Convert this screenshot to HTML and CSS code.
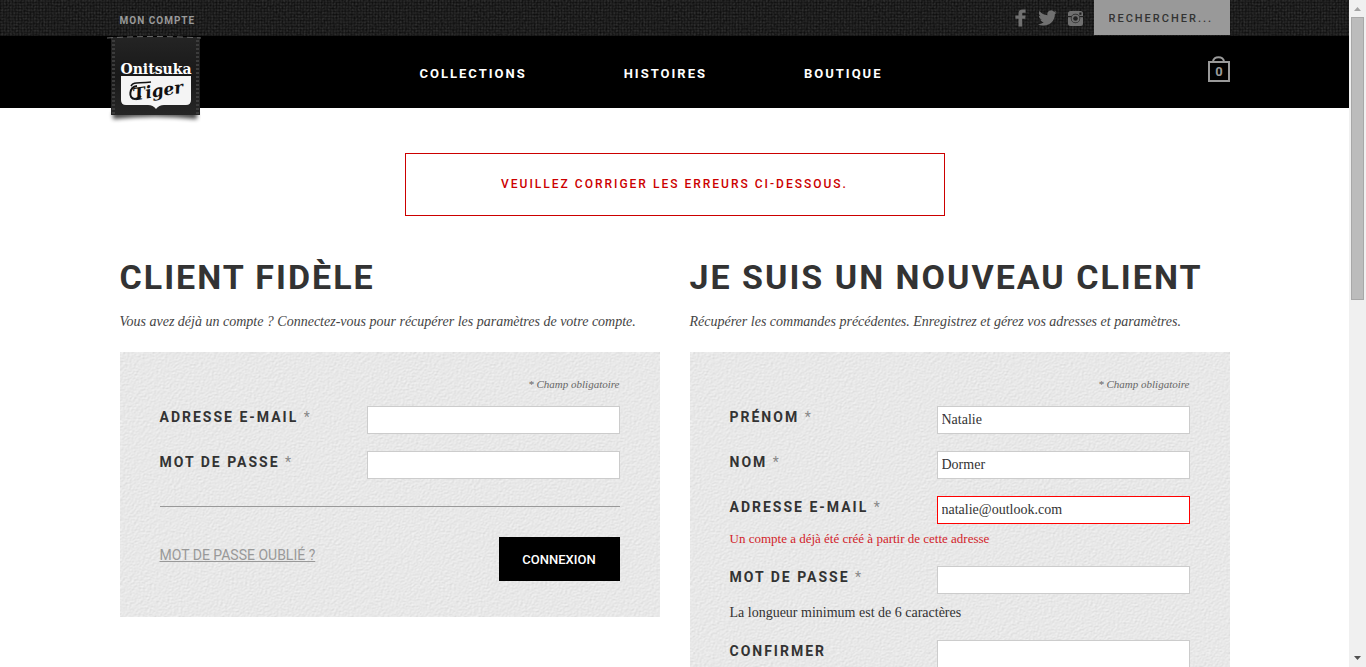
FILE: index.html
```html
<!DOCTYPE html>
<html lang="fr">
<head>
<meta charset="utf-8">
<meta name="viewport" content="width=device-width, initial-scale=1">
<title>Onitsuka Tiger</title>
<link rel="stylesheet" href="styles.css">
</head>
<body>
<div class="window">
  <div class="page">
    <header>
      <div class="topbar">
        <div class="container topbar-row">
          <a class="account" href="#">MON COMPTE</a>
          <div class="tools">
            <a href="#" aria-label="Facebook"><svg width="12" height="18" viewBox="0 0 12 18"><path d="M3.500 17.500V9.800H.4V6.400h3.100V4.500C3.500 1.700 5 .4 7.600.4h3v3.300H8.500C7.500 3.700 7.200 4.100 7.200 5v1.400h3.400l-.4 3.400h-3v7.700z"/></svg></a>
            <a href="#" aria-label="Twitter"><svg width="19" height="16" viewBox="0 0 19 16"><path d="M19 2.300c-.7.300-1.300.5-2.100.6.800-.5 1.300-1.200 1.600-2-.7.400-1.500.7-2.400.9A3.800 3.800 0 0 0 9.500 5.300C6.200 5.100 3.400 3.600 1.500 1.100c-1.100 1.800-.5 4 1.100 5.100-.6 0-1.100-.2-1.700-.5 0 1.900 1.300 3.400 3 3.800-.6.200-1.100.2-1.700.1.500 1.500 1.900 2.600 3.500 2.600C4 13.600 2.100 14.100 0 13.900c1.700 1 3.700 1.700 5.800 1.700 7.200 0 11.300-6 11-11.300.8-.5 1.600-1.200 2.200-2z"/></svg></a>
            <a href="#" aria-label="Instagram"><svg width="15" height="15" viewBox="0 0 15 15"><path fill-rule="evenodd" d="M2.500 0h10A2.500 2.500 0 0 1 15 2.500v10a2.500 2.500 0 0 1-2.500 2.500h-10A2.500 2.500 0 0 1 0 12.500v-10A2.500 2.500 0 0 1 2.500 0zM11.300 1.500v2.300h2.200V1.500z"/><path class="hole" d="M0 5h3.600v1.200H0zM11.400 5H15v1.200h-3.600z"/><circle class="hole" cx="7.500" cy="7.500" r="4.700"/><circle cx="7.500" cy="7.500" r="4"/><circle class="hole" cx="7.500" cy="7.500" r="2.300"/></svg></a>
            <input class="search" type="text" placeholder="RECHERCHER..." aria-label="Rechercher">
          </div>
        </div>
      </div>
      <div class="mainbar">
        <div class="container mainbar-row">
          <a class="logo" href="#" aria-label="Onitsuka Tiger">
            <svg width="94" height="88" viewBox="0 0 94 88">
              <defs>
                <linearGradient id="patch" x1="0" y1="0" x2="0" y2="1"><stop offset="0" stop-color="#242424"/><stop offset=".5" stop-color="#191919"/><stop offset="1" stop-color="#262626"/></linearGradient>
                <filter id="soft" x="-10%" y="-60%" width="120%" height="240%"><feGaussianBlur stdDeviation="2"/></filter>
              </defs>
              <path d="M6 76H90V83Q48 78 6 83z" fill="#000" opacity=".75" filter="url(#soft)"/>
              <path d="M4 1H93V79H4z" fill="url(#patch)"/>
              <path d="M0 2Q47-1 94 2" fill="none" stroke="#666" stroke-dasharray="6 4"/>
              <path d="M6.500 4V78M90.500 4V78" fill="none" stroke="#3c3c3c" stroke-width="3" stroke-dasharray="2 2"/>
              <path d="M14 40H84V64Q84 69 79 69H57Q52 69 49 73Q46 69 41 69H19Q14 69 14 64z" fill="#f4f4f4"/>
              <text class="logo-name" x="49" y="38" text-anchor="middle">Onitsuka</text>
              <text class="logo-tiger" x="51" y="61" text-anchor="middle" transform="rotate(-9 49 56)">Tiger</text>
              <path d="M24 50C27 45 32 48 44 46" fill="none" stroke="#111" stroke-width="1.500"/>
              <path d="M30 50C22 51 21 63 28 63C31 63 33 61 34 60" fill="none" stroke="#111" stroke-width="2"/>
            </svg>
          </a>
          <nav class="menu">
            <a href="#">COLLECTIONS</a>
            <a href="#">HISTOIRES</a>
            <a href="#">BOUTIQUE</a>
          </nav>
          <a class="bag" href="#" aria-label="Panier">
            <svg width="22" height="26" viewBox="0 0 22 26"><path d="M1 6H21V25H1zM5 6C5 -.5 16 -.5 16 6" fill="none" stroke="#999" stroke-width="2"/><text class="bag-count" x="11" y="20" text-anchor="middle">0</text></svg>
          </a>
        </div>
      </div>
    </header>

    <main class="container">
      <p class="alert" role="alert">VEUILLEZ CORRIGER LES ERREURS CI-DESSOUS.</p>
      <div class="columns">
        <section>
          <h1>CLIENT FIDÈLE</h1>
          <p class="intro">Vous avez déjà un compte ? Connectez-vous pour récupérer les paramètres de votre compte.</p>
          <form class="panel">
            <p class="note">* Champ obligatoire</p>
            <div class="field"><label for="login-mail">ADRESSE E-MAIL <span>*</span></label><input id="login-mail" type="email"></div>
            <div class="field"><label for="login-pass">MOT DE PASSE <span>*</span></label><input id="login-pass" type="password"></div>
            <div class="actions">
              <a href="#">MOT DE PASSE OUBLIÉ ?</a>
              <button type="button">CONNEXION</button>
            </div>
          </form>
        </section>
        <section>
          <h1>JE SUIS UN NOUVEAU CLIENT</h1>
          <p class="intro">Récupérer les commandes précédentes. Enregistrez et gérez vos adresses et paramètres.</p>
          <form class="panel">
            <p class="note">* Champ obligatoire</p>
            <div class="field"><label for="first">PRÉNOM <span>*</span></label><input id="first" type="text" value="Natalie"></div>
            <div class="field"><label for="last">NOM <span>*</span></label><input id="last" type="text" value="Dormer"></div>
            <div class="field invalid"><label for="mail">ADRESSE E-MAIL <span>*</span></label><input id="mail" type="email" value="natalie@outlook.com" aria-describedby="mail-error"><p id="mail-error" class="error">Un compte a déjà été créé à partir de cette adresse</p></div>
            <div class="field"><label for="pass">MOT DE PASSE <span>*</span></label><input id="pass" type="password" aria-describedby="pass-hint"><p id="pass-hint" class="hint">La longueur minimum est de 6 caractères</p></div>
            <div class="field"><label for="confirm">CONFIRMER</label><input id="confirm" type="password"></div>
          </form>
        </section>
      </div>
    </main>
  </div>
  <div class="scrollbar" aria-hidden="true">
    <svg width="17" height="17" viewBox="0 0 17 17"><path d="M5 11L8.500 7L12 11z" fill="#a3a3a3"/></svg>
    <div class="thumb"></div>
    <svg class="down" width="17" height="17" viewBox="0 0 17 17"><path d="M5 6H12L8.500 10z" fill="#505050"/></svg>
  </div>
</div>
</body>
</html>
```
FILE: styles.css
```css
* { box-sizing: border-box; }
body { margin: 0; background: #fff; color: #333; font-family: Roboto, sans-serif; }
p, h1 { margin: 0; }
a { color: inherit; text-decoration: none; }
svg { display: block; }

.window { display: flex; height: 100vh; }
.page { flex: 1; min-width: 0; overflow: hidden; }
.container { max-width: 1110px; margin: 0 auto; }

.topbar {
  background-color: #2c2c2c;
  background-image:
    repeating-linear-gradient(0deg, rgba(0, 0, 0, .25) 0 1px, transparent 1px 3px),
    repeating-linear-gradient(90deg, rgba(0, 0, 0, .25) 0 1px, transparent 1px 3px),
    url("data:image/svg+xml,%3Csvg xmlns='http://www.w3.org/2000/svg' width='200' height='36'%3E%3Cfilter id='n' x='0' y='0' width='1' height='1'%3E%3CfeTurbulence type='fractalNoise' baseFrequency='.5' numOctaves='2' stitchTiles='stitch'/%3E%3CfeColorMatrix values='0 0 0 0 0 0 0 0 0 0 0 0 0 0 0 1 0 0 0 -.3'/%3E%3C/filter%3E%3Crect width='200' height='36' filter='url(%23n)'/%3E%3C/svg%3E");
}
.topbar-row { display: flex; justify-content: space-between; height: 36px; }
.account { color: #999; font-size: 10px; font-weight: 700; letter-spacing: 1px; line-height: 41px; }
.tools { display: flex; align-items: center; }
.tools a { margin-right: 11px; }
.tools svg { fill: #707070; }
.tools .hole { fill: #222; }
.search {
  align-self: flex-start; width: 136px; height: 35px; padding: 2px 15px 0; border: 0; border-radius: 0;
  background: #999; color: #333; font: 500 11px Roboto, sans-serif; letter-spacing: 2px;
}
.search::placeholder { color: #333; }

.mainbar { background: #000; }
.mainbar-row { display: flex; align-items: flex-start; height: 72px; }
.logo { margin-left: -13px; height: 72px; }
.logo-name { fill: #fff; font: 700 14px "DejaVu Serif", serif; }
.logo-tiger { fill: #111; font: italic 700 20px "DejaVu Serif", serif; font-size: 17px; }
.menu { display: flex; flex: 1; gap: 97px; padding-left: 219px; line-height: 76px; color: #fff; font-size: 13px; font-weight: 700; letter-spacing: 2px; }
.bag { margin-top: 20px; }
.bag-count { fill: #999; font: 700 13px Roboto, sans-serif; }

.alert {
  max-width: 540px; margin: 45px auto 39px; border: 1px solid #c00; color: #c00;
  font-size: 12px; font-weight: 500; letter-spacing: 2px; line-height: 61px; text-align: center;
}
.columns { display: grid; grid-template-columns: 1fr 1fr; gap: 30px; align-items: start; }
h1 { font-size: 34px; font-weight: 700; letter-spacing: 2px; line-height: 44px; white-space: nowrap; }
.intro { margin: 12px 0 19px; color: #444; font: italic 14px/22px "Liberation Serif", serif; white-space: nowrap; }

.panel {
  padding: 22px 40px 36px; background-color: #e6e6e6;
  background-image: url("data:image/svg+xml,%3Csvg xmlns='http://www.w3.org/2000/svg' width='300' height='300'%3E%3Cfilter id='n' x='0' y='0' width='1' height='1' color-interpolation-filters='sRGB'%3E%3CfeTurbulence type='fractalNoise' baseFrequency='.45 .6' numOctaves='2' stitchTiles='stitch'/%3E%3CfeDiffuseLighting lighting-color='%23fff' surfaceScale='.2' diffuseConstant='1.05'%3E%3CfeDistantLight azimuth='235' elevation='60'/%3E%3C/feDiffuseLighting%3E%3C/filter%3E%3Crect width='300' height='300' filter='url(%23n)'/%3E%3C/svg%3E");
}
.note { margin-bottom: 12px; color: #666; font: italic 11px/20px "Liberation Serif", serif; text-align: right; }
.field { display: grid; grid-template-columns: 45fr 55fr; margin-bottom: 17px; }
.field label { font-size: 14px; font-weight: 700; letter-spacing: 2px; line-height: 22px; }
.field label span { color: #888; font-weight: 400; }
.field input {
  width: 100%; height: 28px; padding: 0 4px; border: 1px solid #ccc; border-radius: 0;
  background: #fff; color: #333; font: 14px "Liberation Serif", serif;
}
.field.invalid input { border-color: #f00; }
.error, .hint { grid-column: 1 / -1; line-height: 20px; font-family: "Liberation Serif", serif; }
.error { margin-top: 5px; color: #d2232a; font-size: 13px; }
.hint { margin-top: 9px; font-size: 14px; }
.actions { display: flex; justify-content: space-between; margin-top: 27px; padding-top: 30px; border-top: 1px solid #999; }
.actions a { align-self: flex-start; margin-top: 7px; color: #999; font-size: 14px; line-height: 22px; text-decoration: underline; }
.actions button { width: 121px; height: 44px; border: 0; background: #000; color: #fff; font: 500 13px Roboto, sans-serif; }

.scrollbar { display: flex; flex-direction: column; width: 17px; background: #f0f0f0; }
.thumb { height: 283px; margin: 0 2px; border: 1px solid #a8a8a8; background: #bcbcbc; }
.down { margin-top: auto; }
```
